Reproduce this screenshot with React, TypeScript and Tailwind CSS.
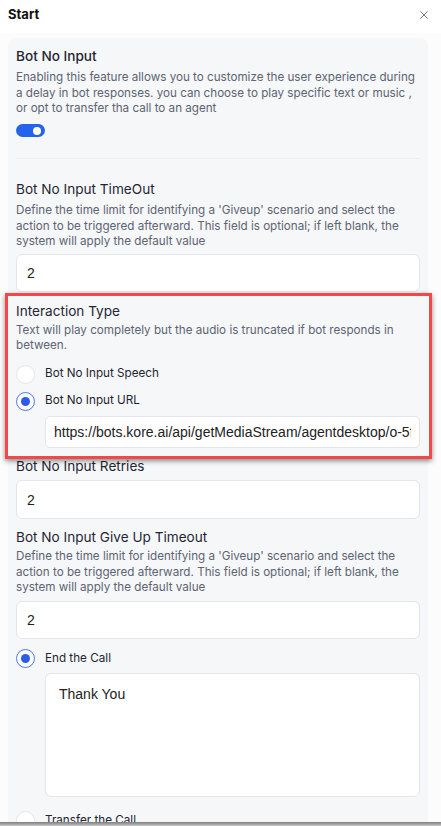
import { X } from "lucide-react";

const font = { fontFamily: "Inter, 'Noto Sans', sans-serif" };

function Title({ children, className = "" }: { children: React.ReactNode; className?: string }) {
  return <div className={`text-[13.6px] leading-[20px] text-[#1f2633] ${className}`}>{children}</div>;
}

function Desc({ children, className = "" }: { children: React.ReactNode; className?: string }) {
  return <p className={`text-[11.65px] leading-[15.5px] text-[#5d6472] ${className}`}>{children}</p>;
}

function Field({ value, className = "" }: { value: string; className?: string }) {
  return (
    <input
      readOnly
      value={value}
      className={`block w-full h-[38px] rounded-md border border-[#e3e6ea] bg-white px-[10px] text-[14px] text-[#222] outline-none font-['Liberation_Sans',Arial,sans-serif] ${className}`}
    />
  );
}

function Radio({ checked, label }: { checked?: boolean; label: string }) {
  return (
    <div className="flex items-center h-[19px]">
      {checked ? (
        <span className="w-[19px] h-[19px] rounded-full border border-[#4a78f0] bg-white flex items-center justify-center">
          <span className="w-[9px] h-[9px] rounded-full bg-[#2b5ce6]" />
        </span>
      ) : (
        <span className="w-[19px] h-[19px] rounded-full border border-[#e4e6ea] bg-white" />
      )}
      <span className="ml-[10px] text-[11.7px] text-[#1f2633]">{label}</span>
    </div>
  );
}

export default function App() {
  return (
    <div className="w-[441px] h-[826px] overflow-hidden bg-white flex flex-col" style={font}>
      <div className="h-[822px] overflow-hidden flex flex-col">
        {/* header */}
        <div className="h-[33px] shrink-0 flex items-start justify-between pl-2 pr-[10px] pt-[5px]">
          <span className="text-[13px] leading-[18px] font-bold text-[#111]">Start</span>
          <X size={14} strokeWidth={1.4} className="text-[#555] mt-[3px]" />
        </div>

        <div className="flex-1 bg-[#fcfcfd] pt-[5px]">
          <div className="ml-2 w-[420px] rounded-t-lg bg-[#f6f7f9] px-2 pt-2 pb-10">
            <Title className="font-medium">Bot No Input</Title>
            <Desc className="mt-1">
              Enabling this feature allows you to customize the user experience during a delay in bot responses. you
              can choose to play specific text or music , or opt to transfer tha call to an agent
            </Desc>
            <div className="mt-[7.5px] w-[29px] h-[13px] rounded-full bg-[#2563eb] flex items-center justify-end pr-[4px]">
              <span className="w-[8px] h-[8px] rounded-full bg-white" />
            </div>
            <div className="mt-[21px] h-px bg-[#eceef1]" />

            <Title className="mt-5">Bot No Input TimeOut</Title>
            <Desc className="mt-1">
              Define the time limit for identifying a 'Giveup' scenario and select the action to be triggered afterward.
              This field is optional; if left blank, the system will apply the default value
            </Desc>
            <Field value="2" className="mt-[4px]" />

            {/* highlighted section */}
            <div className="relative pt-[9px]">
              <div className="absolute left-[-11px] right-[-12px] top-[1px] bottom-[-11px] border-[3px] border-[#f24848] shadow-[0_2px_5px_rgba(0,0,0,0.45)] pointer-events-none" />
              <Title>Interaction Type</Title>
              <Desc className="mt-[2px]">
                Text will play completely but the audio is truncated if bot responds in between.
              </Desc>
              <div className="mt-[11px] flex flex-col gap-[8px]">
                <Radio label="Bot No Input Speech" />
                <Radio checked label="Bot No Input URL" />
              </div>
              <div className="pl-[29px] mt-[5.5px]">
                <input
                  readOnly
                  value="https://bots.kore.ai/api/getMediaStream/agentdesktop/o-5f2c8a1e-9b7d-4c3a-a6e1-2d4b8f0c7e91/audio.mp3"
                  className="block w-full h-[32px] rounded-[5px] border border-[#e3e6ea] bg-white px-[8px] text-[14px] text-[#222] outline-none font-['Liberation_Sans',Arial,sans-serif]"
                />
              </div>
            </div>

            <Title className="mt-2">Bot No Input Retries</Title>
            <Field value="2" className="mt-1 h-[39px]" />

            <Title className="mt-2">Bot No Input Give Up Timeout</Title>
            <Desc className="mt-[2px]">
              Define the time limit for identifying a 'Giveup' scenario and select the action to be triggered afterward.
              This field is optional; if left blank, the system will apply the default value
            </Desc>
            <Field value="2" className="mt-[5px]" />

            <div className="mt-[10.5px]">
              <Radio checked label="End the Call" />
            </div>
            <div className="pl-[29px] mt-[5px]">
              <textarea
                readOnly
                value="Thank You"
                className="block w-full h-[124px] resize-none rounded-md border border-[#e3e6ea] bg-white px-[13px] pt-[10px] text-[14px] text-[#222] outline-none font-['Liberation_Sans',Arial,sans-serif]"
              />
            </div>
            <div className="mt-[14px]">
              <Radio label="Transfer the Call" />
            </div>
          </div>
        </div>
      </div>
      <div className="h-[4px] bg-gradient-to-b from-[#7d7d7d] to-[#c9c9c9]" />
    </div>
  );
}
